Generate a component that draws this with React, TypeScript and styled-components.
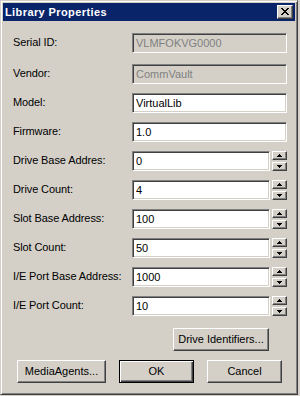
import React from 'react';
import styled, { createGlobalStyle } from 'styled-components';

const Global = createGlobalStyle`
  html, body { margin: 0; padding: 0; background: #D4D0C8; }
  body {
    width: 300px; height: 396px; overflow: hidden;
    font-family: "Liberation Sans", Arial, sans-serif;
    font-size: 11px; color: #000;
  }
  * { box-sizing: border-box; }
`;

const Window = styled.div`
  width: 298px;
  height: 395px;
  background: #D4D0C8;
  border: 1px solid;
  border-color: #D4D0C8 #404040 #404040 #D4D0C8;
  box-shadow: inset 1px 1px 0 #fff, inset -1px -1px 0 #808080;
  padding: 2px;
  display: flex;
  flex-direction: column;
`;

const TitleBar = styled.div`
  height: 18px;
  background: #0A246A;
  display: flex;
  align-items: center;
  justify-content: space-between;
  padding: 0 2px 0 2px;
`;

const Title = styled.span`
  color: #fff;
  font-weight: bold;
  font-size: 11px;
  letter-spacing: 0.4px;
  line-height: 18px;
`;

const CloseButton = styled.div`
  width: 16px;
  height: 14px;
  background: #D4D0C8;
  border: 1px solid;
  border-color: #fff #404040 #404040 #fff;
  box-shadow: inset -1px -1px 0 #808080;
  display: flex;
  align-items: center;
  justify-content: center;
  padding: 0 1px 1px 0;
`;

const Body = styled.div`
  display: flex;
  flex-direction: column;
  padding: 12px 0 0 10px;
`;

const Form = styled.div`
  display: flex;
  flex-direction: column;
  gap: 9px;
`;

const Row = styled.div<{ $extra?: number }>`
  display: grid;
  grid-template-columns: 119px 155px;
  align-items: start;
  height: 20px;
  margin-top: ${(p) => p.$extra || 0}px;
`;

const Label = styled.span`
  padding-top: 3px;
  line-height: 13px;
  letter-spacing: -0.1px;
  white-space: nowrap;
`;

const TextBox = styled.input<{ $w?: number }>`
  width: ${(p) => p.$w || 155}px;
  height: 20px;
  margin: 0;
  border: 1px solid;
  border-color: #808080 #fff #fff #808080;
  box-shadow: inset 1px 1px 0 #404040, inset -1px -1px 0 #D4D0C8;
  padding: 0 3px 1px 3px;
  font-family: "Liberation Sans", Arial, sans-serif;
  font-size: 11px;
  color: #000;
  background: #fff;
  outline: none;
  &:disabled {
    background: #D4D0C8;
    color: #808080;
    -webkit-text-fill-color: #808080;
    opacity: 1;
  }
`;

const SpinField = styled.div`
  display: flex;
  gap: 2px;
`;

const SpinColumn = styled.div`
  display: flex;
  flex-direction: column;
  gap: 2px;
`;

const SpinButton = styled.div`
  width: 15px;
  height: 9px;
  border: 1px solid;
  border-color: #fff #404040 #404040 #fff;
  box-shadow: inset -1px -1px 0 #808080;
  background: #D4D0C8;
  display: flex;
  align-items: center;
  justify-content: center;
  padding: 0 1px 0 0;
`;

const Button = styled.div<{ $w: number; $default?: boolean }>`
  width: ${(p) => p.$w}px;
  height: 23px;
  background: #D4D0C8;
  border: 1px solid;
  border-color: ${(p) => (p.$default ? '#000' : '#fff #404040 #404040 #fff')};
  box-shadow: ${(p) =>
    p.$default
      ? 'inset 1px 1px 0 #fff, inset -1px -1px 0 #404040, inset -2px -2px 0 #808080'
      : 'inset -1px -1px 0 #808080'};
  display: flex;
  align-items: center;
  justify-content: center;
  padding-bottom: 1px;
  white-space: nowrap;
`;

const ActionRow = styled.div`
  display: flex;
  justify-content: flex-end;
  padding-right: 26px;
  margin-top: 12px;
`;

const ButtonRow = styled.div`
  display: flex;
  gap: 13px;
  padding-left: 4px;
  margin-top: 9px;
`;

const CloseIcon = () => (
  <svg width="8" height="7" viewBox="0 0 8 7" shapeRendering="crispEdges">
    <path
      d="M0 0h2v1H0zM6 0h2v1H6zM1 1h2v1H1zM5 1h2v1H5zM2 2h4v1H2zM3 3h2v1H3zM2 4h4v1H2zM1 5h2v1H1zM5 5h2v1H5zM0 6h2v1H0zM6 6h2v1H6z"
      fill="#000"
    />
  </svg>
);

const Arrow = ({ down }: { down?: boolean }) => (
  <svg width="5" height="3" viewBox="0 0 5 3" shapeRendering="crispEdges">
    <path
      d={down ? 'M0 0h5v1H0zM1 1h3v1H1zM2 2h1v1H2z' : 'M2 0h1v1H2zM1 1h3v1H1zM0 2h5v1H0z'}
      fill="#000"
    />
  </svg>
);

const Spin = ({ value }: { value: string }) => (
  <SpinField>
    <TextBox $w={138} defaultValue={value} />
    <SpinColumn>
      <SpinButton>
        <Arrow />
      </SpinButton>
      <SpinButton>
        <Arrow down />
      </SpinButton>
    </SpinColumn>
  </SpinField>
);

export default function App() {
  return (
    <>
      <Global />
      <Window>
        <TitleBar>
          <Title>Library Properties</Title>
          <CloseButton>
            <CloseIcon />
          </CloseButton>
        </TitleBar>
        <Body>
          <Form>
            <Row>
              <Label>Serial ID:</Label>
              <TextBox disabled defaultValue="VLMFOKVG0000" />
            </Row>
            <Row $extra={2}>
              <Label>Vendor:</Label>
              <TextBox disabled defaultValue="CommVault" />
            </Row>
            <Row>
              <Label>Model:</Label>
              <TextBox defaultValue="VirtualLib" />
            </Row>
            <Row>
              <Label>Firmware:</Label>
              <TextBox defaultValue="1.0" />
            </Row>
            <Row>
              <Label>Drive Base Addres:</Label>
              <Spin value="0" />
            </Row>
            <Row>
              <Label>Drive Count:</Label>
              <Spin value="4" />
            </Row>
            <Row>
              <Label>Slot Base Address:</Label>
              <Spin value="100" />
            </Row>
            <Row>
              <Label>Slot Count:</Label>
              <Spin value="50" />
            </Row>
            <Row>
              <Label>I/E Port Base Address:</Label>
              <Spin value="1000" />
            </Row>
            <Row>
              <Label>I/E Port Count:</Label>
              <Spin value="10" />
            </Row>
          </Form>
          <ActionRow>
            <Button $w={96}>Drive Identifiers...</Button>
          </ActionRow>
          <ButtonRow>
            <Button $w={89}>MediaAgents...</Button>
            <Button $w={75} $default>
              OK
            </Button>
            <Button $w={75}>Cancel</Button>
          </ButtonRow>
        </Body>
      </Window>
    </>
  );
}
